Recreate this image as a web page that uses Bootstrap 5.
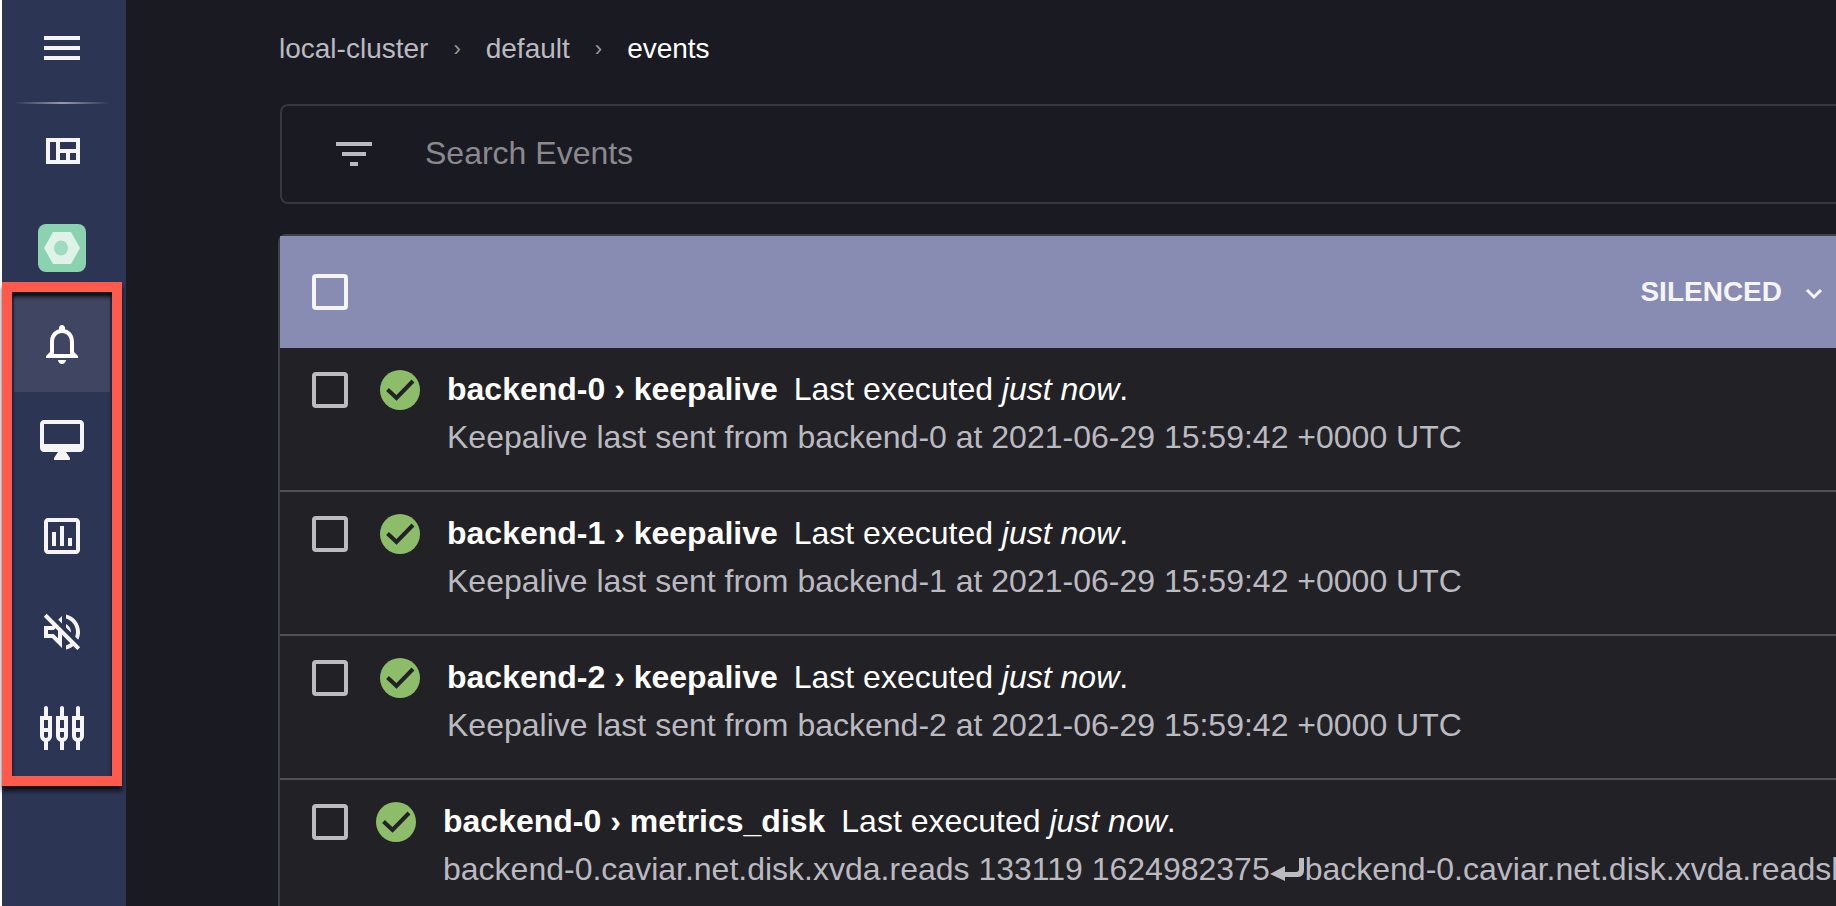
<!DOCTYPE html>
<html lang="en">
<head>
<meta charset="utf-8">
<meta name="viewport" content="width=device-width, initial-scale=1">
<title>Events</title>
<link href="https://cdn.jsdelivr.net/npm/bootstrap@5.3.0/dist/css/bootstrap.min.css" rel="stylesheet">
<style>
  body { background: #1a1a23; color: #fff; font-family: "Liberation Sans", Arial, sans-serif; font-size: 32px; line-height: 48px; }
  .app-shell { height: 100vh; border-left: 2px solid #fff; }
  .side { width: 124px; background: #2d3555; }
  .side-item { width: 96px; height: 96px; padding: 0; border: 0; border-radius: 0; background: none; color: #f5f5f8; }
  .side-item.active { background: #404562; color: #fff; }
  .side-menu { height: 102px; padding-bottom: 6px; }
  .side-rule { width: 96px; height: 2px; background: linear-gradient(90deg, rgba(255,255,255,0), rgba(255,255,255,.5), rgba(255,255,255,0)); }
  .side svg { width: 48px; height: 48px; fill: currentColor; display: block; }
  .side-group { position: relative; }
  .side-frame { position: absolute; inset: -14px -12px -10px; border: 10px solid #ff5a4b; filter: drop-shadow(0 5px 2px rgba(0,0,0,.7)); pointer-events: none; }
  .page { padding-left: 152px; }
  .crumbs { font-size: 28px; line-height: 40px; padding: 29px 0 0 1px; margin-bottom: 35px; gap: 25px; }
  .crumbs a { color: #babac0; text-decoration: none; }
  .crumbs .breadcrumb-item.active { color: #fff; padding: 0; }
  .crumbs .breadcrumb-item.active::before { content: none; }
  .crumbs .sep { color: #9a9a9f; font-size: 22px; }
  .search { height: 100px; border: 2px solid #37373c; border-right: 0; border-radius: 8px 0 0 8px; margin-left: 2px; margin-bottom: 30px; padding-left: 48px; }
  .search svg { width: 48px; height: 48px; fill: #babac0; flex: none; }
  .search input, .search input:focus { font-size: 32px; color: #fff; background: none; border: 0; box-shadow: none; padding: 0 0 2px 47px; }
  .search input::placeholder { color: #8a8a8e; opacity: 1; }
  .events { border: 2px solid #3f3f45; border-right: 0; border-bottom: 0; border-top-left-radius: 8px; }
  .events-head { height: 112px; background: #888cb2; padding: 0 8px 0 32px; }
  .box { appearance: none; flex: none; width: 36px; height: 36px; margin: 0; border: 4px solid #bcbcc0; border-radius: 4px; background: none; }
  .events-head .box { border-color: #f5f5f8; }
  .silenced { padding: 0; border: 0; color: #f5f5f8; font-size: 28px; font-weight: 700; gap: 18px; }
  .silenced svg { width: 28px; height: 28px; fill: none; stroke: currentColor; stroke-width: 3; }
  .event { background: #222126; border-bottom: 2px solid #4f4f54; padding: 17px 0 29px 32px; gap: 32px; white-space: nowrap; overflow: hidden; }
  .event .box { margin-top: 7px; }
  .event b { margin-right: 7px; }
  .event-main { gap: 27px; }
  .event-long { gap: 28px; }
  .ok { flex: none; width: 40px; height: 40px; margin-top: 5px; }
  .detail { color: #babac0; }
  .ret { width: 35px; height: 24px; fill: #bcbcc0; vertical-align: -2px; }
</style>
</head>
<body class="overflow-hidden">
<svg class="d-none" aria-hidden="true">
  <symbol id="check" viewBox="0 0 40 40"><circle cx="20" cy="20" r="20" fill="#8dbd69"/><path d="M7.500 19.500l9 8.500L33 11" fill="none" stroke="#222126" stroke-width="4"/></symbol>
  <symbol id="return" viewBox="0 0 35 24"><path d="M0 16L15 8v6h11c2 0 3-1 3-3V0h5v12c0 4-2 7-6 7H15v4z"/></symbol>
</svg>
<div class="app-shell d-flex">
  <nav class="side d-flex flex-column align-items-center flex-shrink-0 pe-1" aria-label="Main">
    <button class="side-item side-menu btn d-flex align-items-center justify-content-center" type="button" aria-label="Menu"><svg viewBox="0 0 24 24"><path d="M3 18h18v-2H3v2zm0-5h18v-2H3v2zm0-7v2h18V6H3z"/></svg></button>
    <div class="side-rule"></div>
    <a href="#" class="side-item d-flex align-items-center justify-content-center" aria-label="Dashboard"><svg viewBox="0 0 24 24"><path fill-rule="evenodd" d="M4 5h17v13H4zM6 7v9h3V7zM11 7v3.500h8V7zM11 12.500V16h3v-3.500zM16 12.500V16h3v-3.500z"/></svg></a>
    <a href="#" class="side-item d-flex align-items-center justify-content-center" aria-label="Namespace"><svg viewBox="0 0 48 48"><rect width="48" height="48" rx="8" fill="#8bd2b0"/><path d="M15 8h18l9 16-9 16H15L6 24z" fill="#def2e8"/><ellipse cx="23" cy="24" rx="7" ry="7.500" fill="#a0dabf"/></svg></a>
    <div class="side-group">
      <a href="#" class="side-item active d-flex align-items-center justify-content-center" aria-label="Events"><svg viewBox="0 0 24 24"><path d="M12 22c1.100 0 2-.9 2-2h-4c0 1.100.9 2 2 2zm6-6v-5c0-3.070-1.630-5.640-4.500-6.320V4c0-.83-.67-1.500-1.500-1.500s-1.500.67-1.500 1.500v.68C7.640 5.360 6 7.920 6 11v5l-2 2v1h16v-1l-2-2zm-2 1H8v-6c0-2.480 1.510-4.500 4-4.500s4 2.020 4 4.500v6z"/></svg></a>
      <a href="#" class="side-item d-flex align-items-center justify-content-center" aria-label="Entities"><svg viewBox="0 0 24 24"><path d="M21 2H3c-1.100 0-2 .9-2 2v12c0 1.100.9 2 2 2h7l-2 3v1h8v-1l-2-3h7c1.100 0 2-.9 2-2V4c0-1.100-.9-2-2-2zm0 12H3V4h18v10z"/></svg></a>
      <a href="#" class="side-item d-flex align-items-center justify-content-center" aria-label="Checks"><svg viewBox="0 0 24 24"><path d="M9 17H7v-7h2v7zm4 0h-2V7h2v10zm4 0h-2v-4h2v4zm2 2H5V5h14v14zm0-16H5c-1.100 0-2 .9-2 2v14c0 1.100.9 2 2 2h14c1.100 0 2-.9 2-2V5c0-1.100-.9-2-2-2z"/></svg></a>
      <a href="#" class="side-item d-flex align-items-center justify-content-center" aria-label="Silences"><svg viewBox="0 0 24 24"><path d="M4.340 2.930L2.930 4.340 7.290 8.700 7 9H3v6h4l5 5v-6.590l4.180 4.180c-.65.49-1.380.88-2.180 1.110v2.060c1.340-.3 2.570-.92 3.610-1.750l2.050 2.050 1.410-1.410L4.340 2.930zM10 15.170L7.830 13H5v-2h2.830l.88-.88L10 11.410v3.760zM19 12c0 .82-.15 1.610-.41 2.340l1.530 1.530c.56-1.170.88-2.480.88-3.870 0-4.280-2.990-7.860-7-8.770v2.060c2.890.86 5 3.540 5 6.710zm-7-8l-1.880 1.880L12 7.760zm4.500 8c0-1.770-1.020-3.290-2.500-4.030v1.790l2.480 2.480c.01-.08.02-.16.02-.24z"/></svg></a>
      <a href="#" class="side-item d-flex align-items-center justify-content-center" aria-label="Configuration"><svg viewBox="0 0 24 24"><g fill-rule="evenodd"><path id="jack" d="M5 2c0-.55-.45-1-1-1s-1 .45-1 1v4H1v10c0 1.300.84 2.400 2 2.820V23h2v-4.180C6.160 18.400 7 17.300 7 16V6H5V2zM3 8h2v4H3V8zM4 17c-.55 0-1-.45-1-1v-2h2v2c0 .55-.45 1-1 1z"/><use href="#jack" x="8"/><use href="#jack" x="16"/></g></svg></a>
      <div class="side-frame"></div>
    </div>
  </nav>
  <main class="page flex-grow-1 overflow-hidden">
    <nav aria-label="breadcrumb">
      <ol class="crumbs breadcrumb">
        <li><a href="#">local-cluster</a></li>
        <li class="sep" aria-hidden="true">›</li>
        <li><a href="#">default</a></li>
        <li class="sep" aria-hidden="true">›</li>
        <li class="breadcrumb-item active" aria-current="page">events</li>
      </ol>
    </nav>
    <div class="search d-flex align-items-center">
      <svg viewBox="0 0 24 24"><path d="M10 18h4v-2h-4v2zM3 6v2h18V6H3zm3 7h12v-2H6v2z"/></svg>
      <input class="form-control" type="text" placeholder="Search Events" aria-label="Search Events">
    </div>
    <section class="events">
      <div class="events-head d-flex align-items-center justify-content-between">
        <input class="box" type="checkbox" aria-label="Select all">
        <button class="silenced btn d-flex align-items-center" type="button">SILENCED <svg viewBox="0 0 28 28"><path d="M7 12l7 7 7-7"/></svg></button>
      </div>
      <div class="event d-flex align-items-start">
        <input class="box" type="checkbox" aria-label="Select backend-0 keepalive">
        <div class="event-main d-flex"><svg class="ok"><use href="#check"/></svg>
          <div><div><b>backend-0 › keepalive</b> Last executed <em>just now</em>.</div><div class="detail">Keepalive last sent from backend-0 at 2021-06-29 15:59:42 +0000 UTC</div></div></div>
      </div>
      <div class="event d-flex align-items-start">
        <input class="box" type="checkbox" aria-label="Select backend-1 keepalive">
        <div class="event-main d-flex"><svg class="ok"><use href="#check"/></svg>
          <div><div><b>backend-1 › keepalive</b> Last executed <em>just now</em>.</div><div class="detail">Keepalive last sent from backend-1 at 2021-06-29 15:59:42 +0000 UTC</div></div></div>
      </div>
      <div class="event d-flex align-items-start">
        <input class="box" type="checkbox" aria-label="Select backend-2 keepalive">
        <div class="event-main d-flex"><svg class="ok"><use href="#check"/></svg>
          <div><div><b>backend-2 › keepalive</b> Last executed <em>just now</em>.</div><div class="detail">Keepalive last sent from backend-2 at 2021-06-29 15:59:42 +0000 UTC</div></div></div>
      </div>
      <div class="event event-long d-flex align-items-start">
        <input class="box" type="checkbox" aria-label="Select backend-0 metrics_disk">
        <div class="event-main d-flex"><svg class="ok"><use href="#check"/></svg>
          <div><div><b>backend-0 › metrics_disk</b> Last executed <em>just now</em>.</div><div class="detail">backend-0.caviar.net.disk.xvda.reads 133119 1624982375<svg class="ret"><use href="#return"/></svg>backend-0.caviar.net.disk.xvda.readsl</div></div></div>
      </div>
    </section>
  </main>
</div>
<script src="https://cdn.jsdelivr.net/npm/bootstrap@5.3.0/dist/js/bootstrap.bundle.min.js"></script>
</body>
</html>
